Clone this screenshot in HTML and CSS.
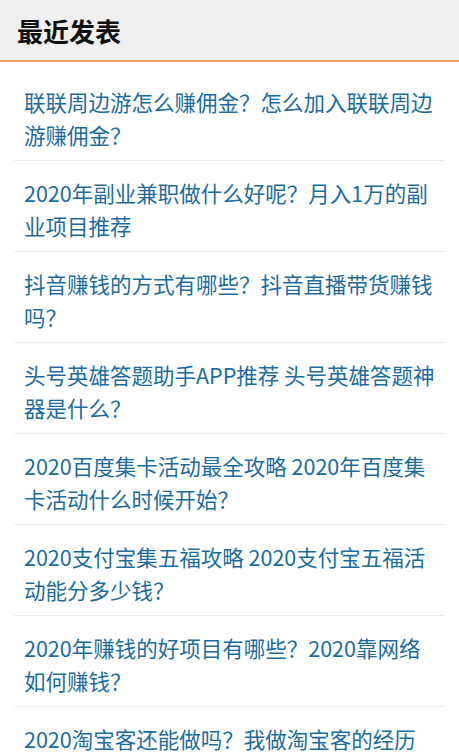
FILE: index.html
```html
<html><head>
<link rel="stylesheet" href="styles.css">
</head>
<body>
<div class="widget">
    <h3 class="widget-title">最近发表</h3>
    <ul class="post-list">
        <li><a href="#">联联周边游怎么赚佣金？怎么加入联联周边游赚佣金？</a></li>
        <li><a href="#">2020年副业兼职做什么好呢？月入1万的副业项目推荐</a></li>
        <li><a href="#">抖音赚钱的方式有哪些？抖音直播带货赚钱吗？</a></li>
        <li><a href="#">头号英雄答题助手APP推荐 头号英雄答题神器是什么？</a></li>
        <li><a href="#">2020百度集卡活动最全攻略 2020年百度集卡活动什么时候开始？</a></li>
        <li><a href="#">2020支付宝集五福攻略 2020支付宝五福活动能分多少钱？</a></li>
        <li><a href="#">2020年赚钱的好项目有哪些？2020靠网络如何赚钱？</a></li>
        <li><a href="#">2020淘宝客还能做吗？我做淘宝客的经历</a></li>
    </ul>
</div>
</body>
</html>
```

FILE: styles.css
```css
body {
    margin: 0;
    background: #fff;
    font-family: "Noto Sans CJK SC", "Noto Sans", sans-serif;
}

.widget-title {
    margin: 0;
    height: 60px;
    line-height: 62px;
    padding-left: 17px;
    background: #f0f0f0;
    border-bottom: 2px solid #ee9a6c;
    color: #111;
    font-size: 26px;
    font-weight: bold;
}

.post-list {
    list-style: none;
    margin: 0 14px;
    padding: 8px 0 0;
}

.post-list li {
    padding: 15px 10px 9px;
    border-bottom: 1px solid #ececec;
    font-size: 21.5px;
    line-height: 33px;
}

.post-list a {
    color: #1c6ca0;
    text-decoration: none;
}
```
